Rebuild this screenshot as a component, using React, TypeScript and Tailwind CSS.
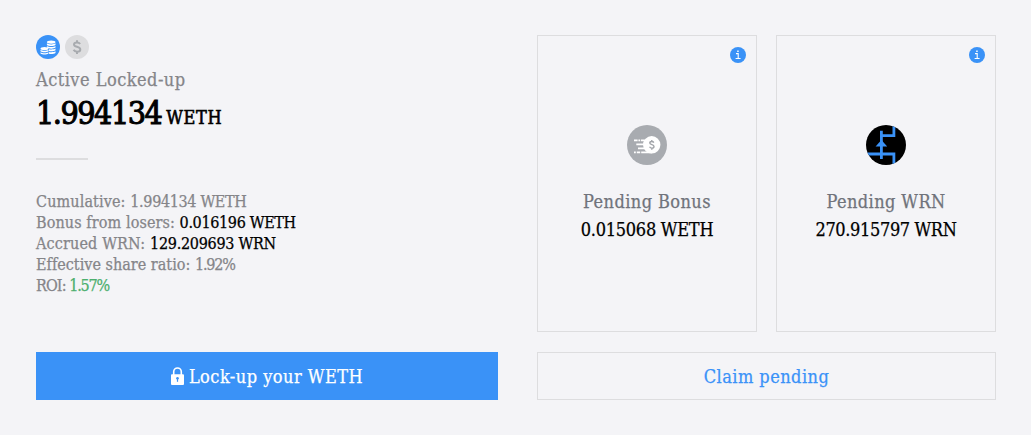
import * as React from 'react';

const CoinsIcon = () => (
  <svg viewBox="0 0 24 24" className="block h-6 w-6">
    <circle cx="12" cy="12" r="12" fill="#3a92f7" />
    <g fill="#fff">
      <ellipse cx="15.2" cy="7.1" rx="4.3" ry="1.7" />
      <path d="M10.9 8.3c1.8 1.5 6.8 1.5 8.6 0v1.6c-1.8 1.5-6.8 1.5-8.6 0z" />
      <path d="M10.9 10.9c1.8 1.5 6.8 1.5 8.6 0v1.6c-1.8 1.5-6.8 1.5-8.6 0z" />
      <path d="M13 14.2c2 .5 4.9.3 6.5-.6v1.6c-1.4 1-4.4 1.2-6.5.8z" />
      <path d="M13 16.9c2 .5 4.9.3 6.5-.6v1.6c-1.4 1-4.4 1.2-6.5.8z" />
      <ellipse cx="8.5" cy="13.5" rx="4" ry="1.6" />
      <path d="M4.5 14.7c1.8 1.4 6.2 1.4 8 0v1.5c-1.8 1.4-6.2 1.4-8 0z" />
      <path d="M4.5 17.3c1.8 1.4 6.2 1.4 8 0v1.1c-1.8 1.5-6.2 1.5-8 0z" />
    </g>
  </svg>
);

const DollarIcon = () => (
  <svg viewBox="0 0 24 24" className="block h-6 w-6">
    <circle cx="12" cy="12" r="12" fill="#dddddf" />
    <path
      d="M15.1 8.9C14.5 7.9 13.4 7.4 12 7.4c-1.8 0-3 .8-3 2.1 0 3 6.3 1.5 6.3 4.9 0 1.5-1.4 2.3-3.2 2.3-1.6 0-2.9-.7-3.5-1.9M12 5.2v2.2M12 16.7v2.2"
      fill="none"
      stroke="#a8abaf"
      strokeWidth="2"
    />
  </svg>
);

const BonusIcon = () => (
  <svg viewBox="0 0 40 40" className="block h-10 w-10">
    <circle cx="20" cy="20" r="20" fill="#a8abb0" />
    <circle cx="24.7" cy="19.8" r="8.7" fill="#fff" />
    <path
      d="M7 15.4h3.6M11.4 15.4h1.8M14 15.4H22M9.3 19.4h8M11 23.4h8M7 27.4h1.8M9.8 27.4h3.4M14.2 27.4H25"
      stroke="#fff"
      strokeWidth="1.8"
    />
    <path
      d="M26.8 17.6c-.4-.8-1.1-1.1-2-1.1-1.2 0-2 .6-2 1.5 0 2.1 4.2 1.2 4.2 3.4 0 1.1-.9 1.7-2.1 1.7-1.1 0-1.9-.5-2.3-1.3M24.8 14.9v1.6M24.8 23.1v1.6"
      fill="none"
      stroke="#a1a4a9"
      strokeWidth="1.4"
    />
  </svg>
);

const WrnIcon = () => (
  <svg viewBox="0 0 40 40" className="block h-10 w-10">
    <clipPath id="wrn-disc">
      <circle cx="20" cy="20" r="20" />
    </clipPath>
    <g clipPath="url(#wrn-disc)">
      <path d="M0 0h40v40H0z" fill="#000" />
      <path
        d="M15.4 5.8V34M15.4 10.7h12.5V0M0 29h27.9v11"
        fill="none"
        stroke="#3a92f7"
        strokeWidth="2.8"
      />
      <path d="M15.4 15l5.8 6.6H9.6z" fill="#3a92f7" />
    </g>
  </svg>
);

const InfoIcon = () => (
  <svg viewBox="0 0 16 16" className="block h-4 w-4">
    <circle cx="8" cy="8" r="8" fill="#3a92f7" />
    <path d="M6 6.6h2.2v4.8M5.6 11.5h5" fill="none" stroke="#fff" strokeWidth="1.1" />
    <path d="M7.2 3.5h1.5v1.5H7.2z" fill="#fff" />
  </svg>
);

const LockIcon = () => (
  <svg viewBox="0 0 13 18" className="block h-[18px] w-[13px]">
    <path d="M2.7 8V4.8a3.8 3.8 0 0 1 7.6 0V8" fill="none" stroke="#fff" strokeWidth="1.6" />
    <rect y="7.3" width="13" height="10.7" rx="1" fill="#fff" />
    <circle cx="6.5" cy="11.3" r="1.3" fill="#3a92f7" />
    <path d="M5.9 11.5h1.2v3.3H5.9z" fill="#3a92f7" />
  </svg>
);

type PendingCardProps = {
  icon: React.ReactNode;
  title: React.ReactNode;
  amount: React.ReactNode;
};

const PendingCard = ({ icon, title, amount }: PendingCardProps) => (
  <div className="relative flex h-[297px] w-[220px] flex-col items-center border border-[#dddddf] pt-[89px]">
    <div className="absolute right-[10px] top-[11px]">
      <InfoIcon />
    </div>
    {icon}
    <div className="mt-[23px] text-lg leading-7 text-[#70737b]">{title}</div>
    <div className="text-lg leading-7 text-black">{amount}</div>
  </div>
);

const App = () => (
  <div className="flex h-[435px] w-[1031px] justify-between whitespace-nowrap bg-[#f4f4f7] py-[35px] pl-9 pr-[35px] font-['Roboto_Slab','DejaVu_Serif_Condensed','DejaVu_Serif',serif] [font-stretch:condensed] [-webkit-text-stroke-width:0.25px]">
    <div className="flex w-[462px] flex-col justify-between">
      <div>
        <div className="flex gap-[5px]">
          <CoinsIcon />
          <DollarIcon />
        </div>
        <div className="mt-[7px] text-lg leading-7 text-[#858589]">
          <span className="tracking-[0.48px]">Active Locked-up</span>
        </div>
        <div className="flex items-baseline gap-[5px] pt-px leading-9 text-black">
          <span className="text-[32px] tracking-[-1.5px] [-webkit-text-stroke-width:1px]">1.994134</span>
          <span className="text-lg tracking-[0.6px] [-webkit-text-stroke-width:0.6px]">WETH</span>
        </div>
        <div className="mt-[26px] h-0.5 w-[52px] bg-[#dddddf]" />
        <div className="mt-[31px] text-base leading-[21px] text-[#858589]">
          <div>
            <span className="tracking-[0.12px]">Cumulative: </span>
            <span className="tracking-[-0.35px]">1.994134 WETH</span>
          </div>
          <div>
            <span className="tracking-[0.1px]">Bonus from losers: </span>
            <span className="tracking-[-0.35px] text-black">0.016196 WETH</span>
          </div>
          <div>
            <span className="tracking-[0.15px]">Accrued WRN: </span>
            <span className="tracking-[-0.28px] text-black">129.209693 WRN</span>
          </div>
          <div>
            <span className="tracking-[0.02px]">Effective share ratio: </span>
            <span className="tracking-[-1.2px]">1.92%</span>
          </div>
          <div>
            <span className="tracking-[-0.9px]">ROI: </span>
            <span className="tracking-[-1.2px] text-[#4caf6e]">1.57%</span>
          </div>
        </div>
      </div>
      <button className="flex h-12 w-full items-center justify-center gap-[5px] bg-[#3a92f7] text-lg text-white">
        <LockIcon />
        <span className="pt-0.5 tracking-[0.48px]">Lock-up your WETH</span>
      </button>
    </div>

    <div className="flex w-[459px] flex-col justify-between">
      <div className="flex justify-between">
        <PendingCard
          icon={<BonusIcon />}
          title={<span className="tracking-[0.42px]">Pending Bonus</span>}
          amount={<span className="tracking-[-0.25px]">0.015068 WETH</span>}
        />
        <PendingCard
          icon={<WrnIcon />}
          title={<span className="tracking-[0.42px]">Pending WRN</span>}
          amount={<span className="tracking-[-0.35px]">270.915797 WRN</span>}
        />
      </div>
      <button className="h-12 w-full border border-[#dddddf] pt-0.5 text-lg text-[#3a92f7]">
        <span className="tracking-[0.45px]">Claim pending</span>
      </button>
    </div>
  </div>
);

export default App;
